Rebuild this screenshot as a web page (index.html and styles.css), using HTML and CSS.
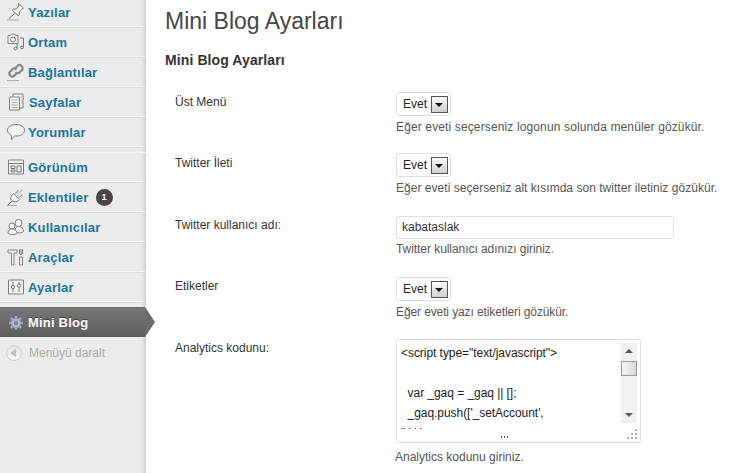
FILE: index.html

```html
<!DOCTYPE html>
<html lang="tr">
<head>
  <meta charset="UTF-8" />
  <meta name="viewport" content="width=device-width, initial-scale=1.0" />
  <title>Mini Blog Ayarları</title>
  <link rel="stylesheet" href="styles.css">
</head>
<body>
  <div class="layout">
    <nav class="sidebar">
      <ul class="menu menu-first">
        <li class="item"><svg class="ico" viewBox="0 0 20 20"><path class="fill" d="M12.500 1.500l5 4.500-1.500.8-2.500 2.500-.3 3.700-1.200.5-5.500-5 .5-1.300 3.500-.3 2.300-2.900z"/><path class="line" d="M8.500 11.500l-6 5.500"/><path class="soft" d="M1 18h12"/></svg><a>Yazılar</a></li>
        <li class="item"><svg class="ico" viewBox="0 0 20 20"><path class="fill" d="M2 3.500h2.500l1-1.500h3l1 1.500h2.500v8h-10z"/><circle class="line" cx="7" cy="7.500" r="2.500"/><path class="line" d="M14 6h3.500v9M11 16.500V11.500"/><ellipse class="line" cx="9.500" cy="16.500" rx="1.500" ry="1.300"/><ellipse class="line" cx="16" cy="15.500" rx="1.500" ry="1.300"/></svg><a>Ortam</a></li>
        <li class="item"><svg class="ico" viewBox="0 0 20 20"><path class="thick" d="M9 6.500l3-3c1.500-1.500 5.500.5 4.500 4l-3 3c-1 1-3 .5-4-.5"/><path class="thick" d="M11 11l-3 3c-1.500 1.500-5.500 0-4.500-3.500l3-3.500c1-1 3-.5 4 .5"/><path class="soft" d="M1 18.500h12"/></svg><a>Bağlantılar</a></li>
        <li class="item"><svg class="ico" viewBox="0 0 20 20"><path class="fill" d="M7 2h10v14H7z"/><path class="fill" d="M3.500 5h10v13h-10z"/><path class="soft" d="M5.500 8h6M5.500 10.500h6M5.500 13h6M5.500 15.500h6M15 5h1M15 8h1M15 11h1"/></svg><a class="pages">Sayfalar</a></li>
        <li class="item"><svg class="ico" viewBox="0 0 20 20"><path class="fill" d="M10 2.500c5 0 8.500 2.500 8.500 5.700s-3.500 5.800-7.500 5.800c-1 0-2 0-2.500-.2L5.500 17.500v-4.300C3 12.200 1.500 10.500 1.500 8.200 1.500 5 5 2.500 10 2.500z"/></svg><a>Yorumlar</a></li>
      </ul>
      <ul class="menu menu-second">
        <li class="item"><svg class="ico" viewBox="0 0 20 20"><path class="fill" d="M2.500 3h15v14h-15z"/><path class="line" d="M2.500 6.500h15M5 9h4v2.500H5zM5 13h4v2H5zM11 9h4v6h-4z"/></svg><a>Görünüm</a></li>
        <li class="item"><svg class="ico" viewBox="0 0 20 20"><path class="fill" d="M7.500 6.500l6 6c-2 2.500-5 3-7.500 1s-1-4.500 1.500-7z"/><path class="line" d="M9.500 6.500l3-3.500M13 10.500l3.500-3M6 14l-4 4"/><path class="soft" d="M11.500 8l4.500-5.500M1 18.500h10"/></svg><a>Eklentiler</a><span class="badge">1</span></li>
        <li class="item"><svg class="ico" viewBox="0 0 20 20"><circle class="fill" cx="12.500" cy="6" r="3.500"/><path class="fill" d="M9 14c0-3 1.500-4.500 3.500-4.500s5 1.500 5 4.500c0 2.500-8.500 2.500-8.500 0z"/><circle class="fill" cx="6" cy="9" r="3"/><path class="fill" d="M2 16c0-2.500 2-4 4-4s5 1.500 5 4c0 2-9 2-9 0z"/></svg><a>Kullanıcılar</a></li>
        <li class="item"><svg class="ico" viewBox="0 0 20 20"><path class="fill" d="M2 3h9v3H8v12H5.500V6H2z"/><path class="line" d="M15 2v6M13.500 2.500v4l1.500 1.500 1.500-1.500v-4"/><path class="fill" d="M13.500 10h3v8h-3z"/></svg><a>Araçlar</a></li>
        <li class="item"><svg class="ico" viewBox="0 0 20 20"><path class="fill" d="M2.500 3h15v14h-15z"/><path class="line" d="M7 5v3M7 12v3M13 5v1.500M13 10.500v4.500"/><circle class="line" cx="7" cy="10" r="1.700"/><circle class="line" cx="13" cy="8.500" r="1.700"/></svg><a>Ayarlar</a></li>
      </ul>
      <div class="current">
        <svg class="ico" viewBox="0 0 20 20"><circle class="gear" cx="10" cy="10" r="5"/><path class="gear-teeth" d="M10 3v14M3 10h14M5 5l10 10M15 5L5 15"/><circle class="gear-hole" cx="10" cy="10" r="3"/></svg>
        <a>Mini Blog</a>
      </div>
      <div class="collapse">
        <span class="collapse-btn"></span>
        <span>Menüyü daralt</span>
      </div>
    </nav>

    <main class="content">
      <h1>Mini Blog Ayarları</h1>
      <h3>Mini Blog Ayarları</h3>

      <div class="row row-a">
        <label>Üst Menü</label>
        <div class="field">
          <div class="select"><span>Evet</span><i class="arrow"></i></div>
          <p class="desc">Eğer eveti seçerseniz logonun solunda menüler gözükür.</p>
        </div>
      </div>

      <div class="row row-b">
        <label>Twitter İleti</label>
        <div class="field">
          <div class="select"><span>Evet</span><i class="arrow"></i></div>
          <p class="desc">Eğer eveti seçerseniz alt kısımda son twitter iletiniz gözükür.</p>
        </div>
      </div>

      <div class="row row-c">
        <label>Twitter kullanıcı adı:</label>
        <div class="field">
          <div class="text-input">kabataslak</div>
          <p class="desc">Twitter kullanıcı adınızı giriniz.</p>
        </div>
      </div>

      <div class="row row-d">
        <label>Etiketler</label>
        <div class="field">
          <div class="select"><span>Evet</span><i class="arrow"></i></div>
          <p class="desc">Eğer eveti yazı etiketleri gözükür.</p>
        </div>
      </div>

      <div class="row row-e">
        <label>Analytics kodunu:</label>
        <div class="field">
          <div class="textarea">
            <div class="code">
              <div>&lt;script type="text/javascript"&gt;</div>
              <div>&nbsp;</div>
              <div>&nbsp;&nbsp;var _gaq = _gaq || [];</div>
              <div>&nbsp;&nbsp;_gaq.push(['_setAccount',</div>
              <div class="cut">" ' ' '</div>
            </div>
            <i class="tail"></i>
            <div class="scrollbar">
              <i class="sb-up"></i>
              <i class="sb-thumb"></i>
              <i class="sb-down"></i>
            </div>
            <i class="grip"></i>
          </div>
          <p class="desc">Analytics kodunu giriniz.</p>
        </div>
      </div>
    </main>
  </div>
</body>
</html>
```

FILE: styles.css

```css
html, body {
  margin: 0;
  padding: 0;
  height: 100%;
  overflow: hidden;
}
body {
  font-family: 'Liberation Sans', Arial, sans-serif;
  font-size: 12px;
  color: #333;
  background: #fff;
}
.layout {
  display: flex;
  height: 473px;
}

/* sol menu */
.sidebar {
  width: 146px;
  flex: none;
  height: 100%;
  background: #ececec;
  box-shadow: inset -5px 0 4px -4px #bdbdbd;
  box-sizing: border-box;
}
.menu {
  list-style: none;
  margin: 0;
  padding: 0;
}
.menu-first {
  margin-top: -2px;
}
.menu-second {
  margin-top: 4px;
  border-top: 1px solid #f8f8f8;
}
.item {
  display: flex;
  align-items: center;
  width: 145px;
  height: 30px;
  box-sizing: border-box;
  padding: 0 0 1px 6px;
  border-bottom: 1px solid #dcdcdc;
  box-shadow: inset 0 -1px 0 #f6f6f6;
}
.item a {
  font-size: 13px;
  font-weight: bold;
  letter-spacing: .2px;
  color: #21759b;
  margin-left: 2px;
}
.item a.pages {
  margin-left: 3px;
}
.ico {
  width: 20px;
  height: 20px;
  flex: none;
}
.line, .soft, .thick {
  fill: none;
  stroke-linejoin: round;
}
.line {
  stroke: #777;
  stroke-width: 1;
}
.soft {
  stroke: #aaa;
  stroke-width: 1;
}
.thick {
  stroke: #888;
  stroke-width: 2.200;
}
.fill {
  fill: #f4f4f4;
  stroke: #808080;
  stroke-width: 1;
  stroke-linejoin: round;
}
.badge {
  width: 17px;
  height: 17px;
  margin-left: 7px;
  border-radius: 50%;
  background: #464646;
  color: #fff;
  font-size: 9px;
  font-weight: bold;
  line-height: 17px;
  text-align: center;
}

.current {
  position: relative;
  display: flex;
  align-items: center;
  width: 145px;
  height: 30px;
  margin-top: 4px;
  padding-left: 6px;
  box-sizing: border-box;
  background: linear-gradient(to bottom, #777, #5c5c5c);
  border-top: 1px solid #6d6d6d;
}
.current:after {
  content: '';
  position: absolute;
  left: 145px;
  top: -1px;
  border-style: solid;
  border-width: 15px 0 15px 10px;
  border-color: transparent transparent transparent #6a6a6a;
}
.current a {
  font-size: 13px;
  font-weight: bold;
  letter-spacing: .2px;
  color: #fff;
  margin-left: 2px;
  text-shadow: 0 -1px 0 #3f3f3f;
}
.gear {
  fill: #a2a9be;
}
.gear-teeth {
  stroke: #a2a9be;
  stroke-width: 2.500;
}
.gear-hole {
  fill: #7f869c;
  stroke: #c6cbd9;
  stroke-width: 1;
}

.collapse {
  display: flex;
  align-items: center;
  height: 30px;
  margin-top: 1px;
  padding-left: 6px;
  font-size: 12px;
  color: #aaa;
}
.collapse-btn {
  position: relative;
  width: 16px;
  height: 16px;
  margin-right: 7px;
  border-radius: 50%;
  background: linear-gradient(to bottom, #e0e0e0, #fafafa);
  border: 1px solid #d0d0d0;
  box-sizing: border-box;
}
.collapse-btn:after {
  content: '';
  position: absolute;
  left: 3px;
  top: 3px;
  border-style: solid;
  border-width: 4px 6px 4px 0;
  border-color: transparent #bbb transparent transparent;
}

/* icerik */
.content {
  flex: 1;
  padding-left: 19px;
  min-width: 0;
}
h1 {
  margin: 7px 0 0;
  font-size: 23px;
  font-weight: normal;
  line-height: 29px;
  color: #464646;
}
h3 {
  margin: 16px 0 0;
  font-size: 14px;
  font-weight: bold;
  line-height: 17px;
  letter-spacing: .1px;
  color: #333;
}
.row {
  display: flex;
  padding-left: 10px;
}
.row-a { margin-top: 23px; }
.row-b { margin-top: 18px; }
.row-c { margin-top: 20px; }
.row-d { margin-top: 20px; }
.row-e { margin-top: 19px; }
label {
  width: 221px;
  flex: none;
  font-size: 12px;
  line-height: 16px;
  padding-top: 1px;
}
.row-a label, .row-b label { padding-top: 2px; }
.field {
  display: flex;
  flex-direction: column;
  align-items: flex-start;
}
.select {
  display: flex;
  align-items: center;
  justify-content: space-between;
  width: 55px;
  height: 24px;
  padding: 0 2px 0 6px;
  box-sizing: border-box;
  border: 1px solid #dfdfdf;
  border-radius: 3px;
  background: #fff;
  color: #222;
}
.arrow {
  position: relative;
  width: 17px;
  height: 17px;
  box-sizing: border-box;
  border: 1px solid #555;
  background: linear-gradient(to bottom, #fafafa, #d0d0d0);
}
.arrow:after {
  content: '';
  position: absolute;
  left: 3px;
  top: 6px;
  border-style: solid;
  border-width: 4px 4px 0 4px;
  border-color: #111 transparent transparent transparent;
}
.desc {
  margin: 3px 0 0;
  font-size: 12px;
  line-height: 16px;
  color: #555;
}
.row-a .desc { letter-spacing: .13px; }
.row-b .desc { letter-spacing: .03px; }
.row-c .desc { margin-top: 2px; letter-spacing: -.06px; }
.row-d .desc { letter-spacing: -.11px; }
.row-e .desc { margin: 6px 0 0 -1px; }
.text-input {
  width: 278px;
  height: 23px;
  padding-left: 5px;
  box-sizing: border-box;
  border: 1px solid #dfdfdf;
  border-radius: 3px;
  line-height: 21px;
  color: #333;
}
.textarea {
  position: relative;
  width: 245px;
  height: 104px;
  box-sizing: border-box;
  border: 1px solid #dfdfdf;
  border-radius: 3px;
  overflow: hidden;
  background: #fff;
}
.code {
  padding: 3px 0 0 4px;
  line-height: 20px;
  letter-spacing: -.05px;
  color: #222;
  white-space: nowrap;
}
.cut {
  height: 6px;
  overflow: hidden;
}
.tail {
  position: absolute;
  left: 104px;
  top: 96px;
  width: 8px;
  height: 2px;
  background: repeating-linear-gradient(to right, #555 0 1px, transparent 1px 3px);
}
.scrollbar {
  position: absolute;
  right: 3px;
  top: 3px;
  width: 16px;
  height: 80px;
  background: #f0f0f0;
}
.sb-up, .sb-down {
  position: absolute;
  left: 4px;
  border-style: solid;
  border-color: transparent;
}
.sb-up {
  top: 6px;
  border-width: 0 4px 4px 4px;
  border-bottom-color: #555;
}
.sb-down {
  bottom: 6px;
  border-width: 4px 4px 0 4px;
  border-top-color: #555;
}
.sb-thumb {
  position: absolute;
  left: 0;
  top: 18px;
  width: 16px;
  height: 15px;
  box-sizing: border-box;
  border: 1px solid #999;
  background: linear-gradient(to right, #f6f6f6, #d8d8d8);
}
.grip {
  position: absolute;
  right: 3px;
  bottom: 3px;
  width: 11px;
  height: 11px;
  background: radial-gradient(circle, #aaa 1px, transparent 1.200px) 0 0 / 4px 4px;
  clip-path: polygon(100% 0, 100% 100%, 0 100%);
}
```
